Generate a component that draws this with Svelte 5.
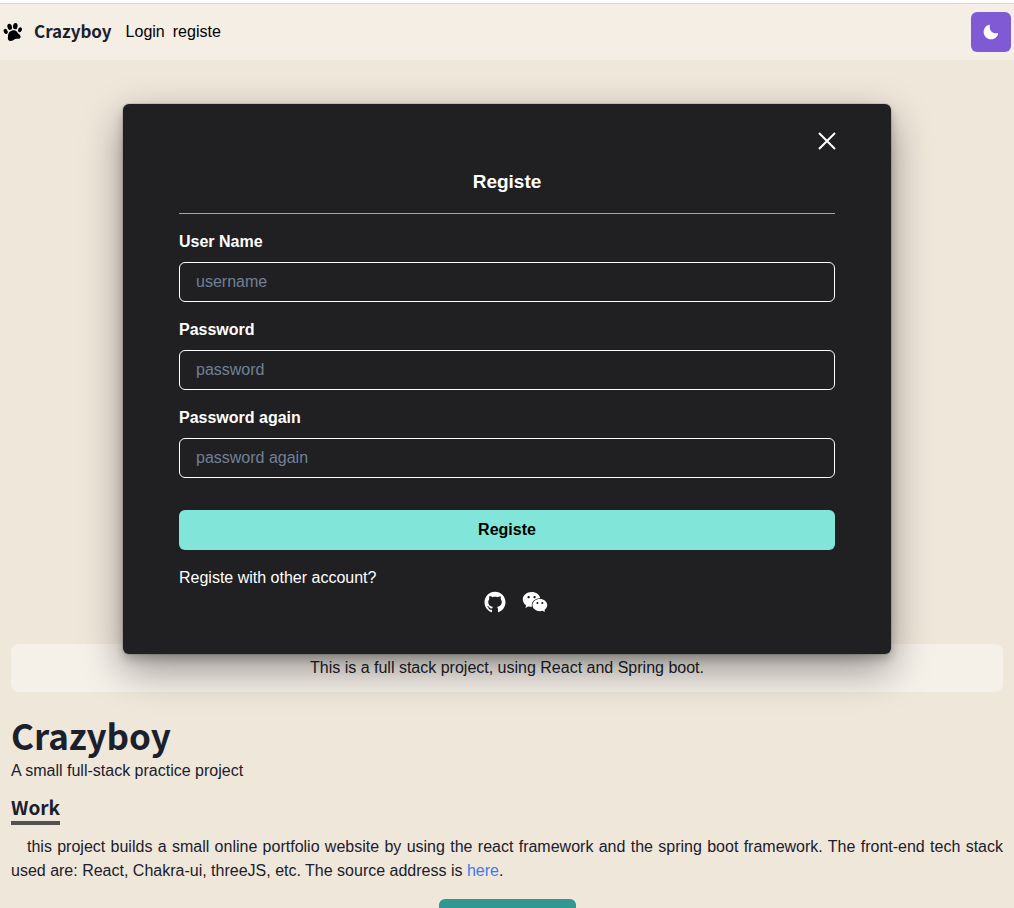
<script>
  const fields = [
    { id: 'username', label: 'User Name', placeholder: 'username', type: 'text' },
    { id: 'password', label: 'Password', placeholder: 'password', type: 'password' },
    { id: 'password-again', label: 'Password again', placeholder: 'password again', type: 'password' }
  ];
</script>

<div class="page">
  <header class="nav">
    <a class="brand" href="#home">
      <svg class="paw" viewBox="0 0 20 20" aria-hidden="true">
        <ellipse cx="2.7" cy="9.4" rx="1.9" ry="2.6" transform="rotate(-24 2.7 9.4)" />
        <ellipse cx="6.7" cy="4.8" rx="2.3" ry="3.1" transform="rotate(-14 6.7 4.8)" />
        <ellipse cx="12.3" cy="4.2" rx="2.3" ry="3.1" transform="rotate(6 12.3 4.2)" />
        <ellipse cx="17" cy="7.8" rx="1.9" ry="2.6" transform="rotate(24 17 7.8)" />
        <path d="M10 8.3C12.2 7.8 13.6 8.9 14.4 10.4C15.1 11.8 17.5 12.4 17.6 14.4C17.7 16.5 15.6 17 13.8 16.8C11.6 16.6 10.7 18.9 8 19.1C5.6 19.2 4.4 17.6 4.9 15.6C5.2 14.3 4.7 13.4 5.4 11.7C6.3 9.7 8.2 8.7 10 8.3Z" />
      </svg>
      <span>Crazyboy</span>
    </a>
    <nav>
      <a href="#login">Login</a>
      <a href="#registe">registe</a>
    </nav>
    <button class="theme" aria-label="Toggle theme">
      <svg viewBox="0 0 24 24" aria-hidden="true"><path d="M21.4,13.7C20.6,13.9,19.8,14,19,14c-5,0-9-4-9-9c0-0.8,0.1-1.6,0.3-2.4c0.1-0.3,0-0.7-0.3-1c-0.3-0.3-0.6-0.4-1-0.3C4.3,2.7,1,7.1,1,12c0,6.1,4.9,11,11,11c4.9,0,9.3-3.3,10.6-8.1c0.1-0.3,0-0.7-0.3-1C22.1,13.7,21.7,13.6,21.4,13.7z" /></svg>
    </button>
  </header>

  <main>
    <div class="scene"></div>
    <p class="notice">This is a full stack project, using React and Spring boot.</p>
    <h1>Crazyboy</h1>
    <p>A small full-stack practice project</p>
    <section>
      <h2>Work</h2>
      <p class="text">this project builds a small online portfolio website by using the react framework and the spring boot framework. The front-end tech stack used are: React, Chakra-ui, threeJS, etc. The source address is <a href="#source">here</a>.</p>
      <button class="more" aria-label="Portfolio"></button>
    </section>
  </main>

  <div class="overlay">
    <form class="modal" role="dialog" aria-labelledby="title">
      <button class="close" type="button" aria-label="Close">
        <svg viewBox="0 0 16 16" aria-hidden="true"><path d="M0 0L16 16M16 0L0 16" /></svg>
      </button>
      <h3 id="title">Registe</h3>
      {#each fields as field}
        <div class="field">
          <label for={field.id}>{field.label}</label>
          <input id={field.id} type={field.type} placeholder={field.placeholder} />
        </div>
      {/each}
      <button class="submit" type="button">Registe</button>
      <p>Registe with other account?</p>
      <div class="social">
        <a href="#github" aria-label="GitHub">
          <svg class="github" viewBox="0 0 1024 1024" aria-hidden="true"><path d="M511.6 76.3C264.3 76.2 64 276.4 64 523.5 64 718.9 189.3 885 363.8 946c23.5 5.9 19.9-10.8 19.9-22.2v-77.5c-135.7 15.9-141.2-73.9-150.3-88.9C215 726 171.5 718 184.5 703c30.9-15.9 62.4 4 98.9 57.9 26.4 39.1 77.9 32.5 104 26 5.7-23.5 17.9-44.5 34.7-60.8-140.6-25.2-199.2-111-199.2-213 0-49.5 16.3-95 48.3-131.7-20.4-60.5 1.9-112.3 4.9-120 58.1-5.2 118.5 41.6 123.2 45.3 33-8.9 70.7-13.6 112.9-13.6 42.4 0 80.2 4.9 113.5 13.9 11.3-8.6 67.3-48.8 121.3-43.9 2.9 7.7 24.7 58.3 5.5 118 32.4 36.8 48.9 82.7 48.9 132.3 0 102.2-59 188.1-200 212.9a127.5 127.5 0 0138.1 91v112.5c.1 9 0 17.9 15 17.9 177.1-59.7 304.6-227 304.6-424.1 0-247.2-200.4-447.3-447.5-447.3z" /></svg>
        </a>
        <a href="#wechat" aria-label="WeChat">
          <svg class="wechat" viewBox="0 0 1024 1024" aria-hidden="true"><path d="M690.1 377.4c5.9 0 11.8.2 17.6.5-24.4-128.7-158.3-227.1-319.9-227.1C209 150.8 64 271.4 64 420.2c0 81.1 43.6 154.2 111.9 203.6a21.5 21.5 0 019.1 17.6c0 2.4-.5 4.6-1.1 6.9-5.5 20.3-14.2 52.8-14.6 54.3-.7 2.6-1.7 5.2-1.7 7.9 0 5.9 4.8 10.8 10.8 10.8 2.3 0 4.2-.9 6.2-2l70.9-40.9c5.3-3.1 11-5 17.2-5 3.2 0 6.4.5 9.5 1.4 33.1 9.5 68.8 14.8 105.7 14.8 6 0 11.9-.1 17.8-.4-7.1-21-10.9-43.1-10.9-66 0-135.8 132.2-245.8 295.3-245.8zm-194.3-86.5c23.8 0 43.2 19.3 43.2 43.1s-19.3 43.1-43.2 43.1c-23.8 0-43.2-19.3-43.2-43.1s19.4-43.1 43.2-43.1zm-215.9 86.2c-23.8 0-43.2-19.3-43.2-43.1s19.3-43.1 43.2-43.1 43.2 19.3 43.2 43.1-19.4 43.1-43.2 43.1zm586.8 415.6c56.9-41.2 93.2-102 93.2-169.7 0-124-120.8-224.5-269.9-224.5-149 0-269.9 100.5-269.9 224.5S540.9 847.5 690 847.5c30.8 0 60.6-4.4 88.1-12.3 2.6-.8 5.2-1.2 7.9-1.2 5.2 0 9.9 1.6 14.3 4.1l59.1 34c1.7 1 3.3 1.7 5.2 1.7a9 9 0 006.4-2.6 9 9 0 002.6-6.4c0-2.2-.9-4.4-1.4-6.6-.3-1.2-7.6-28.3-12.2-45.3-.5-1.9-.9-3.8-.9-5.7.1-5.9 3.1-11.2 7.6-14.5zM600.2 587.2c-19.9 0-36-16.1-36-35.9 0-19.8 16.1-35.9 36-35.9s36 16.1 36 35.9c0 19.8-16.2 35.9-36 35.9zm179.9 0c-19.9 0-36-16.1-36-35.9 0-19.8 16.1-35.9 36-35.9s36 16.1 36 35.9a36.08 36.08 0 01-36 35.9z" /></svg>
        </a>
      </div>
    </form>
  </div>
</div>

<style>
  :global(body) {
    background: #f0e7db;
    overflow: hidden;
  }
  * {
    box-sizing: border-box;
  }
  .page {
    position: relative;
    height: 100vh;
    overflow: hidden;
    border-top: 3px solid #fff;
    color: #1a202c;
    font: 16px/24px "Liberation Sans", Arial, sans-serif;
  }
  h1, h2, h3, p {
    margin: 0;
  }
  a {
    color: inherit;
    text-decoration: none;
  }
  button {
    border: 0;
    border-radius: 6px;
    font: inherit;
    cursor: pointer;
  }
  svg {
    display: block;
    fill: currentColor;
  }
  .nav {
    display: flex;
    align-items: center;
    padding: 8px 3px;
    border-top: 1px solid #d6d6d6;
    background: #f5eee4;
  }
  .brand {
    display: flex;
    align-items: center;
    gap: 11px;
    font: 700 17px/22px "Noto Sans CJK JP", sans-serif;
  }
  .brand span {
    padding-bottom: 2px;
  }
  .paw {
    width: 20px;
    height: 20px;
    color: #000;
  }
  nav {
    display: flex;
    gap: 8px;
    margin-left: 14px;
    color: #000;
  }
  .theme {
    display: grid;
    place-items: center;
    width: 40px;
    height: 40px;
    margin-left: auto;
    padding: 0;
    background: #805ad5;
    color: #fff;
  }
  .theme svg {
    width: 16px;
    height: 16px;
  }
  main {
    padding: 0 11px;
  }
  .scene {
    height: 584px;
  }
  .notice {
    margin-bottom: 24px;
    padding: 12px;
    border-radius: 8px;
    background: #f5f0e8;
    text-align: center;
  }
  h1 {
    padding-bottom: 5px;
    font: 700 35px/38px "Noto Sans CJK JP", sans-serif;
  }
  section {
    display: flex;
    flex-direction: column;
    align-items: flex-start;
  }
  h2 {
    margin: 12px 0 10px;
    padding-bottom: 2px;
    border-bottom: 4px solid #525252;
    font: 700 19px/24px "Noto Sans CJK JP", sans-serif;
  }
  .text {
    text-align: justify;
    text-indent: 16px;
  }
  .text a {
    color: #3d7aed;
  }
  .more {
    align-self: center;
    width: 137px;
    height: 40px;
    margin-top: 16px;
    background: #319795;
  }
  .overlay {
    position: absolute;
    inset: 0;
    display: flex;
    justify-content: center;
    align-items: flex-start;
    padding: 101px 16px 0;
  }
  .modal {
    display: flex;
    flex-direction: column;
    width: 100%;
    max-width: 768px;
    padding: 28px 56px 40px;
    border-radius: 6px;
    background: #202023;
    box-shadow: 0 0 0 1px rgba(0, 0, 0, 0.1), 0 5px 10px rgba(0, 0, 0, 0.2), 0 15px 40px rgba(0, 0, 0, 0.4);
    color: #fff;
  }
  .close {
    align-self: flex-end;
    padding: 1px 0;
    background: none;
    color: #fff;
  }
  .close svg {
    width: 16px;
    height: 16px;
    overflow: visible;
    fill: none;
    stroke: currentColor;
    stroke-width: 2;
  }
  h3 {
    padding: 20px 0 19px;
    border-bottom: 1px solid #a3a3a4;
    font-size: 19px;
    line-height: 24px;
    text-align: center;
  }
  .field {
    display: flex;
    flex-direction: column;
    gap: 8px;
    margin-top: 16px;
  }
  label {
    font-weight: 700;
  }
  input {
    width: 100%;
    height: 40px;
    padding: 0 16px;
    border: 1px solid #fff;
    border-radius: 6px;
    background: transparent;
    color: #fff;
    font: inherit;
  }
  input::placeholder {
    color: #718096;
  }
  .submit {
    height: 40px;
    margin: 32px 0 16px;
    background: #81e6d9;
    color: #000;
    font-weight: 700;
  }
  .social {
    display: flex;
    justify-content: center;
    align-items: center;
    gap: 14px;
    height: 24px;
    padding-left: 18px;
  }
  .github {
    width: 24px;
    height: 24px;
  }
  .wechat {
    width: 28px;
    height: 28px;
  }
</style>
